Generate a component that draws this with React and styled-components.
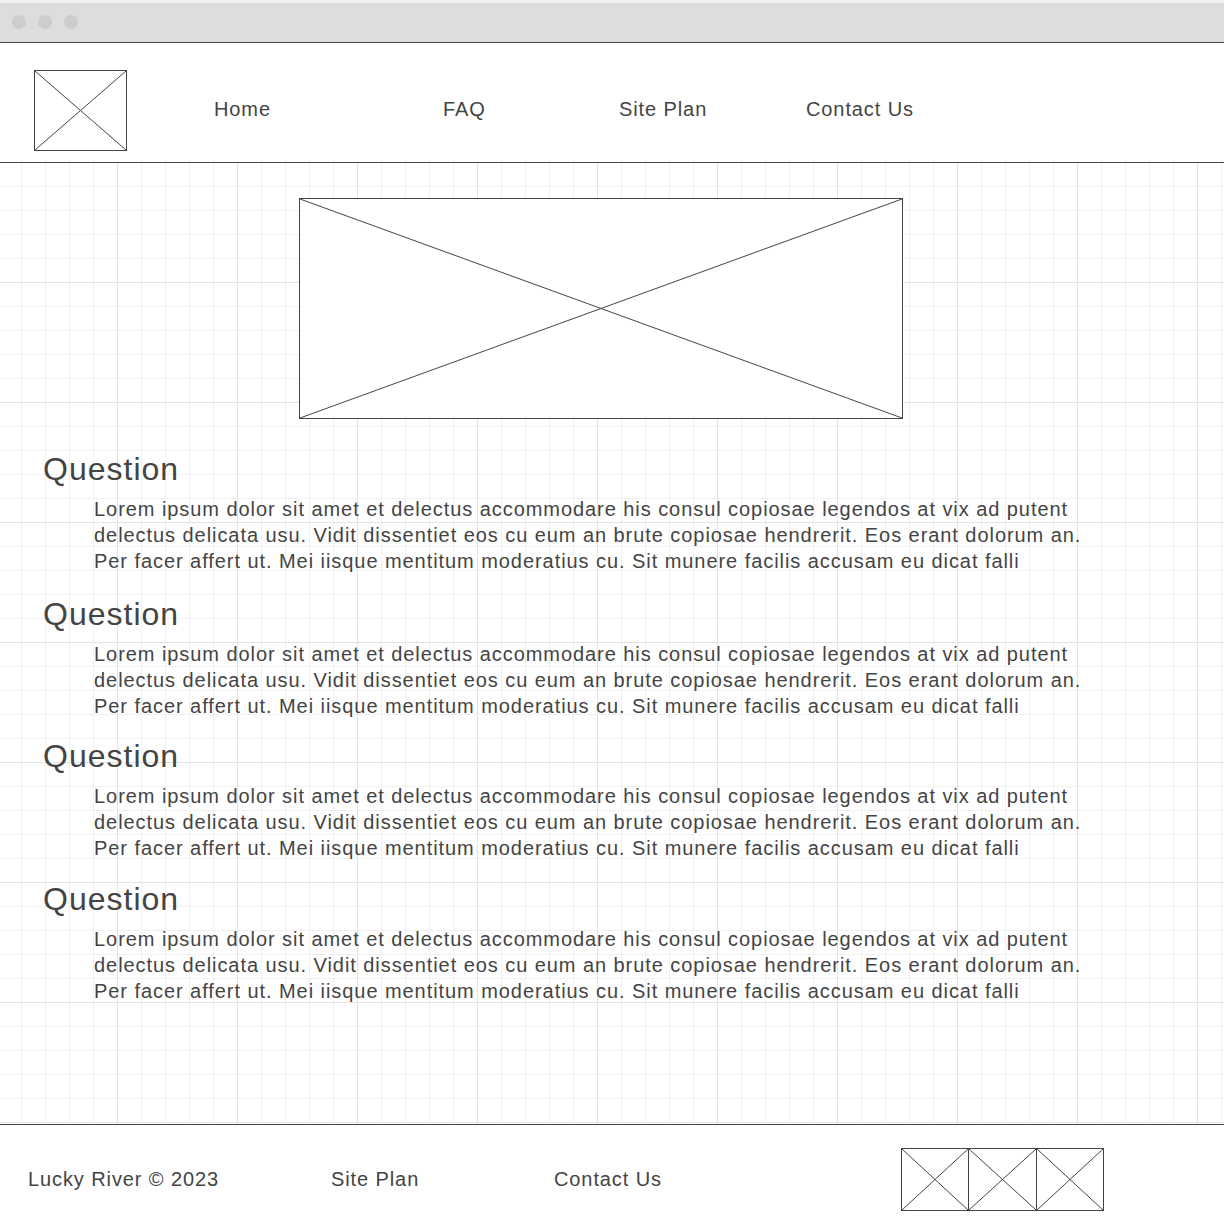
import styled, { createGlobalStyle } from 'styled-components';

const GlobalStyle = createGlobalStyle`
  body {
    margin: 0;
    background: #ffffff;
    font-family: 'Liberation Sans', Arial, sans-serif;
    color: #444444;
  }
`;

const Page = styled.div`
  width: 1224px;
  display: flex;
  flex-direction: column;
`;

const BrowserChrome = styled.div`
  padding-top: 3px;
  background: #f2f2f2;
`;

const ChromeBar = styled.div`
  height: 40px;
  background: #dddddd;
  border-bottom: 1px solid #444444;
  display: flex;
  align-items: center;
  gap: 12px;
  padding-left: 12px;
  padding-bottom: 1px;
  box-sizing: border-box;
`;

const Dot = styled.span`
  width: 14px;
  height: 14px;
  border-radius: 50%;
  background: #cdcdcd;
`;

const Header = styled.header`
  height: 120px;
  padding-top: 27px;
  border-bottom: 1px solid #444444;
  display: flex;
  align-items: flex-start;
  box-sizing: border-box;
`;

const Nav = styled.nav`
  display: flex;
  align-items: center;
  height: 79px;
  margin-left: 87px;
`;

const NavLink = styled.a`
  width: ${(p) => p.$width}px;
  font-size: 20px;
  letter-spacing: 0.9px;
  color: #444444;
  text-decoration: none;
`;

const Main = styled.main`
  height: 961px;
  background-color: #ffffff;
  background-image:
    linear-gradient(to right, #e3e3e3 1px, transparent 1px),
    linear-gradient(to bottom, #e3e3e3 1px, transparent 1px),
    linear-gradient(to right, #f1f1f1 1px, transparent 1px),
    linear-gradient(to bottom, #f1f1f1 1px, transparent 1px);
  background-size: 120px 120px, 120px 120px, 24px 24px, 24px 24px;
  background-position: -3px -1px, -3px -1px, -3px -1px, -3px -1px;
  display: flex;
  flex-direction: column;
  box-sizing: border-box;
  padding-top: 35px;
`;

const Placeholder = styled.div`
  width: ${(p) => p.$w}px;
  height: ${(p) => p.$h}px;
  background: #ffffff;
  border: 1px solid #444444;
  box-sizing: border-box;
  flex-shrink: 0;
`;

const CrossSvg = styled.svg`
  display: block;
  width: 100%;
  height: 100%;
`;

const HeroImage = styled(Placeholder)`
  margin-left: 299px;
  margin-bottom: 23px;
`;

const LogoImage = styled(Placeholder)`
  margin-left: 34px;
`;

const Faq = styled.section`
  display: flex;
  flex-direction: column;
  margin-left: 43px;
`;

const Question = styled.h2`
  margin: ${(p) => p.$gap}px 0 0 0;
  font-size: 32px;
  font-weight: 400;
  letter-spacing: 1px;
  line-height: 54px;
  color: #444444;
`;

const Answer = styled.p`
  margin: 0 0 0 51px;
  width: 1010px;
  font-size: 20px;
  letter-spacing: 0.94px;
  line-height: 26px;
  color: #444444;
`;

const Footer = styled.footer`
  height: 107px;
  border-top: 1px solid #444444;
  display: flex;
  align-items: flex-start;
  padding-left: 28px;
  box-sizing: border-box;
`;

const FooterText = styled.span`
  width: ${(p) => p.$width}px;
  margin-top: 42px;
  font-size: 20px;
  letter-spacing: 0.9px;
  line-height: 24px;
  color: #444444;
`;

const Gallery = styled.div`
  display: flex;
  margin-top: 23px;
`;

const GalleryItem = styled(Placeholder)`
  & + & {
    margin-left: -1px;
  }
`;

function Cross({ w, h }) {
  return (
    <CrossSvg viewBox={`0 0 ${w} ${h}`} preserveAspectRatio="none">
      <line x1="0" y1="0" x2={w} y2={h} stroke="#444" strokeWidth="1" />
      <line x1={w} y1="0" x2="0" y2={h} stroke="#444" strokeWidth="1" />
    </CrossSvg>
  );
}

function ImageBox({ as: Comp = Placeholder, w, h }) {
  return (
    <Comp $w={w} $h={h}>
      <Cross w={w - 2} h={h - 2} />
    </Comp>
  );
}

const lorem =
  'Lorem ipsum dolor sit amet et delectus accommodare his consul copiosae legendos at vix ad putent delectus delicata usu. Vidit dissentiet eos cu eum an brute copiosae hendrerit. Eos erant dolorum an. Per facer affert ut. Mei iisque mentitum moderatius cu. Sit munere facilis accusam eu dicat falli';

const faqGaps = [0, 13, 10, 11];

export default function App() {
  return (
    <>
      <GlobalStyle />
      <Page>
        <BrowserChrome>
          <ChromeBar>
            <Dot />
            <Dot />
            <Dot />
          </ChromeBar>
        </BrowserChrome>
        <Header>
          <ImageBox as={LogoImage} w={93} h={81} />
          <Nav>
            <NavLink $width={229}>Home</NavLink>
            <NavLink $width={176}>FAQ</NavLink>
            <NavLink $width={187}>Site Plan</NavLink>
            <NavLink $width={140}>Contact Us</NavLink>
          </Nav>
        </Header>
        <Main>
          <ImageBox as={HeroImage} w={604} h={221} />
          <Faq>
            {faqGaps.map((gap, i) => (
              <div key={i}>
                <Question $gap={gap}>Question</Question>
                <Answer>{lorem}</Answer>
              </div>
            ))}
          </Faq>
        </Main>
        <Footer>
          <FooterText $width={303}>Lucky River © 2023</FooterText>
          <FooterText $width={223}>Site Plan</FooterText>
          <FooterText $width={347}>Contact Us</FooterText>
          <Gallery>
            <ImageBox as={GalleryItem} w={68} h={63} />
            <ImageBox as={GalleryItem} w={69} h={63} />
            <ImageBox as={GalleryItem} w={68} h={63} />
          </Gallery>
        </Footer>
      </Page>
    </>
  );
}
